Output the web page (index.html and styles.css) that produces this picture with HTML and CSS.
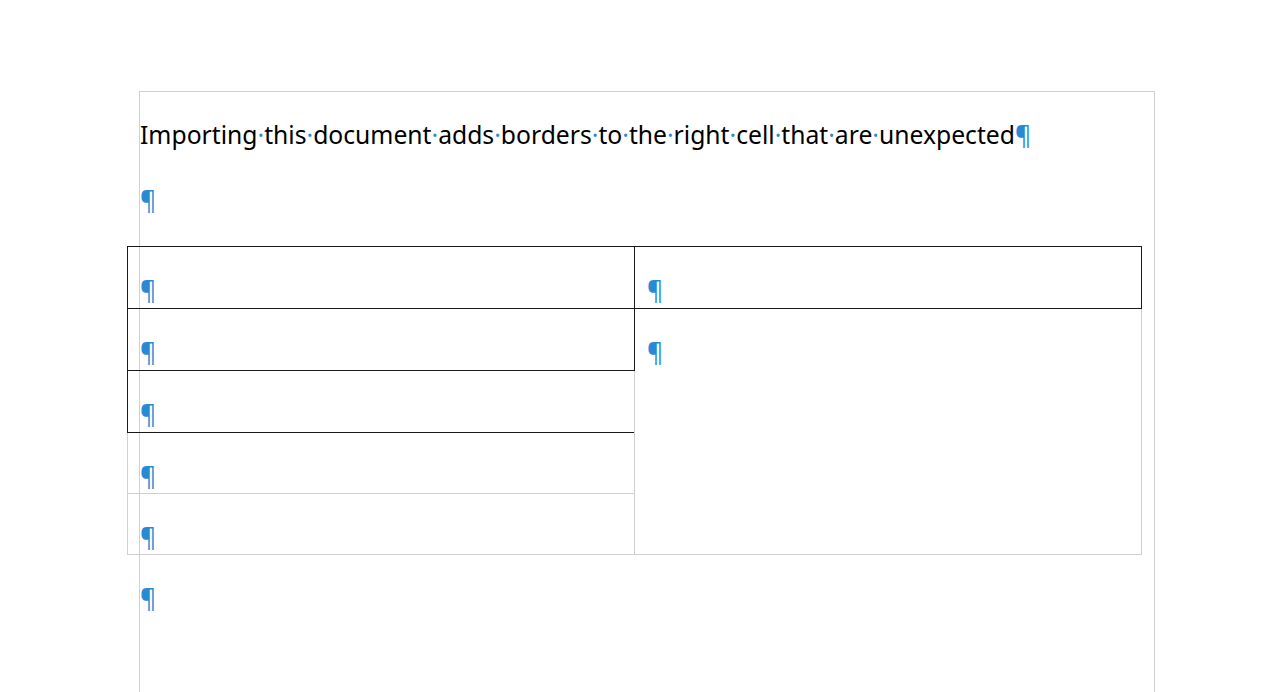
FILE: index.html
```html
<!DOCTYPE html>
<html lang="en">
<head>
<meta charset="utf-8">
<title>Document</title>
<link rel="stylesheet" href="styles.css">
</head>
<body>
<div class="canvas">
  <div class="page">
    <p class="para">Importing<span class="sp">·</span>this<span class="sp">·</span>document<span class="sp">·</span>adds<span class="sp">·</span>borders<span class="sp">·</span>to<span class="sp">·</span>the<span class="sp">·</span>right<span class="sp">·</span>cell<span class="sp">·</span>that<span class="sp">·</span>are<span class="sp">·</span>unexpected<span class="pm">¶</span></p>
    <p class="para"><span class="pm">¶</span></p>
    <table class="tbl">
      <tr class="r62"><td class="blk"><span class="pm">¶</span></td><td class="blk"><span class="pm">¶</span></td></tr>
      <tr class="r62"><td class="blk"><span class="pm">¶</span></td><td class="gry" rowspan="4"><span class="pm">¶</span></td></tr>
      <tr class="r62"><td class="blk"><span class="pm">¶</span></td></tr>
      <tr class="r61"><td class="gry"><span class="pm">¶</span></td></tr>
      <tr class="r61"><td class="gry"><span class="pm">¶</span></td></tr>
    </table>
    <p class="para"><span class="pm">¶</span></p>
  </div>
</div>
</body>
</html>
```

FILE: styles.css
```css
html, body {
  margin: 0;
  padding: 0;
  background: #ffffff;
  overflow: hidden;
  height: 692px;
}

.canvas {
  padding: 91px 0 0 139px;
}

.page {
  width: 1014px;
  height: 700px;
  border-top: 1px solid #d0d0d0;
  border-left: 1px solid #d0d0d0;
  border-right: 1px solid #d0d0d0;
  font-family: "Noto Sans", "Open Sans", sans-serif;
  font-size: 24.7px;
  color: #000;
}

.para {
  margin: 0;
  padding: 26px 0 6px 0;
  line-height: 33px;
  white-space: nowrap;
}

.sp {
  color: #268bd2;
}

.pm {
  color: #268bd2;
}

.tbl {
  border-collapse: collapse;
  margin: 24px 0 0 -13px;
  width: 1015px;
  table-layout: fixed;
}

.tbl td {
  width: 50%;
  vertical-align: top;
  padding: 26px 0 0 12px;
  line-height: 33px;
}

.r62 { height: 62px; }
.r61 { height: 61px; }

.tbl td.blk {
  border: 1px solid #1a1a1a;
}

.tbl td.gry {
  border: 1px solid #d0d0d0;
}
```
